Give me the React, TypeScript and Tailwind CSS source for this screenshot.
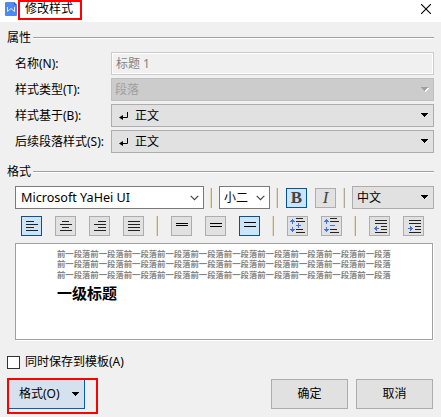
import type { ReactNode } from "react";

const Caret = ({ className = "" }: { className?: string }) => (
  <svg width="8" height="5" viewBox="0 0 8 5" shapeRendering="crispEdges" className={className}>
    <path d="M0 0h7v1h-1v1h-1v1h-1v1h-1v-1h-1v-1h-1v-1h-1z" fill="currentColor" />
  </svg>
);

const Chevron = () => (
  <svg width="9" height="6" viewBox="0 0 9 6" fill="none">
    <path d="M.7.8 4.5 4.6 8.3.8" stroke="#444" strokeWidth="1.2" />
  </svg>
);

const Enter = () => (
  <svg width="10" height="9" viewBox="0 0 10 9" fill="none" className="mr-[6px] mt-[2px]">
    <path d="M8.5 0v5.5h-7" stroke="#000" />
    <path d="M0 5.5 4 3v5z" fill="#000" />
  </svg>
);

const Group = ({ title }: { title: string }) => (
  <div className="flex h-4 items-center pl-[7px] pr-[7px]">
    <span className="w-[26px] whitespace-nowrap">{title}</span>
    <div className="h-[2px] flex-1 border-t border-[#a0a0a0] bg-white" />
  </div>
);

const Field = ({ label, children }: { label: string; children: ReactNode }) => (
  <div className="flex h-[23px] items-center">
    <span className="w-24 shrink-0 whitespace-nowrap">{label}</span>
    {children}
  </div>
);

const Select = ({ children }: { children: ReactNode }) => (
  <div className="flex h-[23px] flex-1 items-center border border-[#adadad] bg-[#e1e1e1] pl-[7px] pr-[4px]">
    <Enter />
    <span className="flex-1">{children}</span>
    <Caret />
  </div>
);

const Tool = ({ on = false, className = "", children }: { on?: boolean; className?: string; children: ReactNode }) => (
  <button
    className={`flex h-5 w-[21px] shrink-0 items-center justify-center border ${
      on ? "border-[#00549c] bg-[#cce4f7]" : "border-[#adadad] bg-[#e1e1e1]"
    } ${className}`}
  >
    {children}
  </button>
);

const Sep = ({ className = "" }: { className?: string }) => (
  <div className={`h-5 w-[2px] shrink-0 border-l border-[#e3d9c3] bg-[#aca899] ${className}`} />
);

/* Each line is [x, y, width] inside the 19x18 face of a tool button. */
const Lines = ({ rows, arrows, color = "#222" }: { rows: number[][]; arrows?: string; color?: string }) => (
  <svg width="19" height="18" viewBox="0 0 19 18" shapeRendering="crispEdges" className="shrink-0">
    {rows.map(([x, y, w]) => (
      <rect key={y} x={x} y={y} width={w} height="1" fill={color} />
    ))}
    {arrows && <path d={arrows} fill="#4474d9" />}
  </svg>
);

const PREVIEW = "前一段落".repeat(10);

export default function App() {
  return (
    <div className="flex h-[417px] w-[441px] flex-col overflow-hidden bg-[#f0f0f0] font-['Noto_Sans','Noto_Sans_CJK_SC',sans-serif] text-[12px] leading-4 text-black">
      <header className="flex h-[22px] items-start justify-between bg-white pr-[10px]">
        <div className="flex">
          <svg width="12" height="14" viewBox="0 0 12 14" className="ml-[5px] mt-[2px]">
            <path d="M1 0h8l3 3v10a1 1 0 0 1-1 1H1a1 1 0 0 1-1-1V1a1 1 0 0 1 1-1z" fill="#4e88f2" />
            <path d="M9 0l3 3H9z" fill="#2d61c4" />
            <path d="M2.5 5v4.5L6 6.5l3.500 3V5" fill="none" stroke="#dce8ff" />
          </svg>
          <div className="ml-px flex h-5 w-16 items-center border-2 border-[#f00] pb-[2px] pl-[5px]">修改样式</div>
        </div>
        <svg width="10" height="10" viewBox="0 0 10 10" className="mt-[4px]">
          <path d="M0 0 10 10M10 0 0 10" stroke="#000" strokeWidth="1.1" />
        </svg>
      </header>

      <div className="mt-[8px]"><Group title="属性" /></div>
      <div className="mt-[6px] flex flex-col gap-[3px] pl-[15px] pr-[7px]">
        <Field label="名称(N):">
          <div className="flex h-[23px] flex-1 items-center border border-[#ccc] p-px shadow-[inset_0_0_0_1px_#fff] pl-[4px] text-[#838383]">标题 1</div>
        </Field>
        <Field label="样式类型(T):">
          <div className="flex h-[23px] flex-1 items-center justify-between border border-[#bfbfbf] bg-[#ccc] pl-[3px] pr-[4px] text-[#a0a0a0]">
            段落
            <Caret className="drop-shadow-[1px_1px_0_#fff]" />
          </div>
        </Field>
        <Field label="样式基于(B):"><Select>正文</Select></Field>
        <Field label="后续段落样式(S):"><Select>正文</Select></Field>
      </div>

      <div className="mt-[11px]"><Group title="格式" /></div>
      <div className="mt-[6px] flex h-[23px] items-center pl-[15px]">
        <div className="flex h-[23px] w-[189px] items-center justify-between border border-[#7a7a7a] bg-white pl-[5px] pr-[4px]">
          <span className="text-[12.6px]">Microsoft YaHei UI</span>
          <Chevron />
        </div>
        <Sep className="ml-[6px]" />
        <div className="ml-[7px] flex h-[23px] w-[51px] items-center justify-between border border-[#7a7a7a] bg-white pl-[4px] pr-[4px]">
          小二
          <Chevron />
        </div>
        <Sep className="ml-[6px]" />
        <Tool on className="ml-[8px]">
          <span className="font-['Liberation_Serif',serif] text-[17px] font-bold text-[#444]">B</span>
        </Tool>
        <Tool className="ml-[8px]">
          <span className="font-['Liberation_Serif',serif] text-[17px] italic text-[#444]">I</span>
        </Tool>
        <Sep className="ml-[7px]" />
        <div className="ml-[7px] flex h-[23px] w-[82px] items-center justify-between border border-[#adadad] bg-[#e1e1e1] pl-[4px] pr-[4px]">
          中文
          <Caret />
        </div>
      </div>

      <div className="mt-[7px] flex h-5 items-center pl-[21px]">
        <div className="flex gap-[13px]">
          <Tool on><Lines rows={[[4, 4, 8], [4, 7, 12], [4, 10, 8], [4, 13, 12]]} /></Tool>
          <Tool><Lines rows={[[6, 4, 7], [4, 7, 12], [6, 10, 7], [4, 13, 12]]} /></Tool>
          <Tool><Lines rows={[[8, 4, 8], [4, 7, 12], [8, 10, 8], [4, 13, 12]]} /></Tool>
          <Tool><Lines rows={[[4, 4, 12], [4, 7, 12], [4, 10, 12], [4, 13, 12]]} /></Tool>
        </div>
        <Sep className="ml-[12px]" />
        <div className="ml-[13px] flex gap-[13px]">
          <Tool><Lines color="#000" rows={[[4, 6, 12], [4, 8, 12]]} /></Tool>
          <Tool><Lines color="#000" rows={[[4, 6, 12], [4, 9, 12]]} /></Tool>
          <Tool on><Lines color="#000" rows={[[4, 5, 12], [4, 9, 12]]} /></Tool>
        </div>
        <Sep className="ml-[12px]" />
        <div className="ml-[13px] flex gap-[13px]">
          <Tool>
            <Lines
              rows={[[8, 1, 7], [8, 4, 9], [8, 12, 7], [8, 15, 9]]}
              arrows="M4 2h1v1h1v1h1v1h-2v2h-1v-2h-2v-1h1v-1h1zM4 10h1v2h2v1h-1v1h-1v1h-1v-1h-1v-1h-1v-1h2zM10 6h1v2h2v1h-2v2h-1v-2h-2v-1h2z"
            />
          </Tool>
          <Tool>
            <Lines
              rows={[[8, 1, 7], [8, 4, 9], [8, 12, 7], [8, 15, 9]]}
              arrows="M4 2h1v1h1v1h1v1h-2v2h-1v-2h-2v-1h1v-1h1zM4 10h1v2h2v1h-1v1h-1v1h-1v-1h-1v-1h-1v-1h2zM8 8h5v1h-5z"
            />
          </Tool>
        </div>
        <Sep className="ml-[12px]" />
        <div className="ml-[13px] flex gap-[13px]">
          <Tool>
            <Lines
              rows={[[5, 3, 12], [5, 6, 12], [11, 9, 6], [11, 12, 6], [5, 15, 12]]}
              arrows="M4 11h1v-1h1v-1h1v2h2v1h-2v2h-1v-1h-1v-1h-1z"
            />
          </Tool>
          <Tool>
            <Lines
              rows={[[5, 3, 12], [5, 6, 12], [11, 9, 6], [11, 12, 6], [5, 15, 12]]}
              arrows="M4 11h2v-2h1v1h1v1h1v1h-1v1h-1v1h-1v-2h-2z"
            />
          </Tool>
        </div>
      </div>

      <div className="ml-[15px] mt-[7px] h-[97px] w-[418px] shrink-0 border border-[#a0a0a0] bg-white pl-[41px] pt-[5px] shadow-[1px_1px_0_#fff]">
        <div className="whitespace-nowrap font-['Liberation_Sans','Noto_Sans_CJK_SC',sans-serif] text-[8.35px] font-bold leading-[10.4px] text-[#858585]">
          {[0, 1, 2].map((n) => <p key={n}>{PREVIEW}</p>)}
        </div>
        <p className="mt-[5px] font-['Noto_Sans_CJK_SC',sans-serif] text-[15px] font-bold leading-4">一级标题</p>
      </div>

      <label className="ml-[7px] mt-[14px] flex h-4 items-center gap-[5px]">
        <span className="h-[13px] w-[13px] border border-[#333] bg-white" />
        同时保存到模板(A)
      </label>

      <footer className="mt-[8px] flex h-9 items-start pl-[7px]">
        <div className="h-9 w-[91px] border-2 border-[#f00]">
          <button className="flex h-[29px] w-[76px] items-center border-b border-r border-[#0060b8] bg-[#d5e1ee] pl-[10px]">
            格式(O)
            <Caret className="ml-[12px]" />
          </button>
        </div>
        <button className="ml-[173px] mt-px h-[30px] w-[77px] border border-[#adadad] bg-[#e1e1e1]">确定</button>
        <button className="ml-[8px] mt-px h-[30px] w-[77px] border border-[#adadad] bg-[#e1e1e1]">取消</button>
      </footer>
    </div>
  );
}
